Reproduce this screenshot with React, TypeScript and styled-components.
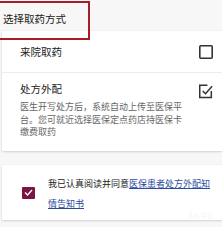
import styled, { createGlobalStyle } from "styled-components";

const GlobalStyle = createGlobalStyle`
  body {
    margin: 0;
    background: #f7f7f7;
    font-family: "Noto Sans CJK SC", "Noto Sans", sans-serif;
    color: #222;
  }
`;

const Page = styled.div`
  width: 222px;
  height: 227px;
  overflow: hidden;
  position: relative;
`;

const Header = styled.div`
  height: 31px;
  display: flex;
  align-items: center;
  padding: 6px 0 0 3px;
  box-sizing: border-box;
  font-size: 10.5px;
  color: #222;
`;

// red annotation frame drawn over the screenshot
const Mark = styled.div`
  position: absolute;
  left: -4px;
  top: 1px;
  width: 90px;
  height: 35px;
  border: 2px solid #a51d28;
  pointer-events: none;
`;

const Card = styled.div<{ $gap?: number }>`
  margin: ${(p) => p.$gap ?? 0}px 0 0 2px;
  background: #fff;
  box-shadow: 0 1px 2px rgba(0, 0, 0, 0.14), 0 0 1px rgba(0, 0, 0, 0.1);
`;

const Row = styled.div<{ $h: number }>`
  display: flex;
  align-items: flex-start;
  justify-content: space-between;
  min-height: ${(p) => p.$h}px;
  box-sizing: border-box;
  padding: 0 9px 0 18px;
  & + & {
    border-top: 1px solid #ececec;
  }
`;

const Name = styled.div<{ $top: number }>`
  font-size: 10.5px;
  line-height: 14px;
  color: #222;
  margin-top: ${(p) => p.$top}px;
`;

const Desc = styled.div`
  font-size: 9px;
  line-height: 12.6px;
  color: #666;
  width: 166px;
  margin-top: 5px;
`;

const Box = styled.div<{ $top: number }>`
  width: 14px;
  height: 14px;
  margin-top: ${(p) => p.$top}px;
  flex: none;
  display: flex;
  svg {
    display: block;
  }
`;

const Agree = styled.div`
  display: flex;
  align-items: center;
  height: 55px;
  padding-left: 20px;
  position: relative;
`;

const Tick = styled.div`
  width: 13px;
  height: 12px;
  background: #7a1646;
  border-radius: 1px;
  flex: none;
  display: flex;
  align-items: center;
  justify-content: center;
`;

const AgreeText = styled.div`
  margin-left: 13px;
  font-size: 9px;
  line-height: 20px;
  color: #222;
  width: 168px;
  margin-top: 2px;
`;

const Link = styled.span`
  color: #2b4a9e;
  text-decoration: underline;
`;

const Watermark = styled.span`
  position: absolute;
  right: 8px;
  bottom: 1px;
  font-size: 7px;
  line-height: 8px;
  color: rgba(0, 0, 0, 0.08);
`;

function EmptyBox() {
  return (
    <svg width="14" height="14" viewBox="0 0 14 14">
      <rect x="0.8" y="0.8" width="12.4" height="12.4" rx="1" fill="none" stroke="#333" strokeWidth="1.6" />
    </svg>
  );
}

function CheckedBox() {
  return (
    <svg width="15" height="17" viewBox="0 0 15 17">
      <path d="M9 2.8H0.8V16H13.2V9" fill="none" stroke="#333" strokeWidth="1.6" />
      <path d="M4 9l3 3 7-8" fill="none" stroke="#333" strokeWidth="1.6" />
    </svg>
  );
}

export default function App() {
  return (
    <Page>
      <GlobalStyle />
      <Header>选择取药方式</Header>
      <Mark />
      <Card>
        <Row $h={41}>
          <Name $top={14}>来院取药</Name>
          <Box $top={14}>
            <EmptyBox />
          </Box>
        </Row>
        <Row $h={79}>
          <div>
            <Name $top={9}>处方外配</Name>
            <Desc>医生开写处方后，系统自动上传至医保平台。您可就近选择医保定点药店持医保卡缴费取药</Desc>
          </div>
          <Box $top={9}>
            <CheckedBox />
          </Box>
        </Row>
      </Card>
      <Card $gap={14}>
        <Agree>
          <Tick>
            <svg width="9" height="7" viewBox="0 0 9 7">
              <path d="M1 3.5l2.5 2.5L8 1" fill="none" stroke="#fff" strokeWidth="1.3" />
            </svg>
          </Tick>
          <AgreeText>
            我已认真阅读并同意<Link>医保患者处方外配知情告知书</Link>
          </AgreeText>
          <Watermark>Bai 经验</Watermark>
        </Agree>
      </Card>
    </Page>
  );
}
